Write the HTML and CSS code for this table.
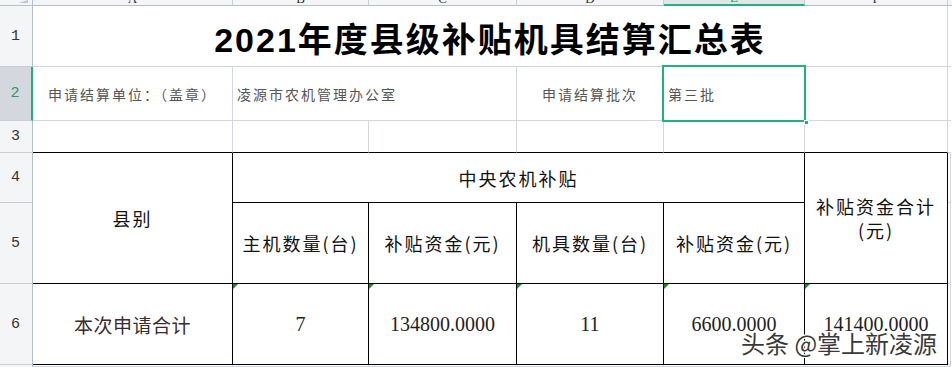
FILE: index.html
```html
<!DOCTYPE html>
<html lang="zh-CN">
<head>
<meta charset="utf-8">
<title>2021年度县级补贴机具结算汇总表</title>
<link rel="stylesheet" href="styles.css">
</head>
<body>
<div class="sheet">
  <div class="corner"><span class="corner-mark"></span></div>
  <div class="colhead"><span>A</span></div>
  <div class="colhead"><span>B</span></div>
  <div class="colhead"><span>C</span></div>
  <div class="colhead"><span>D</span></div>
  <div class="colhead colhead-sel"><span>E</span></div>
  <div class="colhead"><span>F</span></div>
  <div class="colhead colhead-g"></div>
  <div class="colhead colhead-end"></div>

  <div class="rowhead">1</div>
  <div class="cell title span6">2021年度县级补贴机具结算汇总表</div>
  <div class="cell gcol"></div>
  <div class="endcol"></div>

  <div class="rowhead rowhead-sel">2</div>
  <div class="cell info">申请结算单位：（盖章）</div>
  <div class="cell info left span2">凌源市农机管理办公室</div>
  <div class="cell info">申请结算批次</div>
  <div class="cell info left sel-cell">第三批<span class="sel-box"><span class="sel-handle"></span></span></div>
  <div class="cell"></div>
  <div class="cell gcol"></div>
  <div class="endcol"></div>

  <div class="rowhead">3</div>
  <div class="cell above"></div>
  <div class="cell above"></div>
  <div class="cell above"></div>
  <div class="cell above"></div>
  <div class="cell above"></div>
  <div class="cell above"></div>
  <div class="cell gcol"></div>
  <div class="endcol"></div>

  <div class="rowhead">4</div>
  <div class="cell tb th rspan2">县别</div>
  <div class="cell tb th span4">中央农机补贴</div>
  <div class="cell tb th rspan2">补贴资金合计<br>(元)</div>
  <div class="cell gcol gline"></div>
  <div class="endcol"></div>

  <div class="rowhead">5</div>
  <div class="cell tb th">主机数量(台)</div>
  <div class="cell tb th">补贴资金(元)</div>
  <div class="cell tb th">机具数量(台)</div>
  <div class="cell tb th">补贴资金(元)</div>
  <div class="cell gcol gline"></div>
  <div class="endcol"></div>

  <div class="rowhead">6</div>
  <div class="cell tb td tdname">本次申请合计</div>
  <div class="cell tb td flagged"><span class="flag"></span>7</div>
  <div class="cell tb td flagged"><span class="flag"></span>134800.0000</div>
  <div class="cell tb td flagged"><span class="flag"></span>11</div>
  <div class="cell tb td flagged"><span class="flag"></span>6600.0000</div>
  <div class="cell tb td flagged"><span class="flag"></span>141400.0000</div>
  <div class="cell gcol gline"></div>
  <div class="endcol"></div>

  <div class="rowhead rowhead-last"></div>
  <div class="cell"></div>
  <div class="cell"></div>
  <div class="cell"></div>
  <div class="cell"></div>
  <div class="cell"></div>
  <div class="cell"></div>
  <div class="cell gcol gline"></div>
  <div class="endcol"></div>
</div>
<div class="watermark">头条 @掌上新凌源</div>
</body>
</html>
```
FILE: styles.css
```css
* { box-sizing: border-box; }

body {
  margin: 0;
  width: 952px;
  height: 367px;
  overflow: hidden;
  position: relative;
  background: #ffffff;
  font-family: "Noto Sans CJK SC", sans-serif;
}

.sheet {
  display: grid;
  grid-template-columns: 33px 200px 136px 148px 147px 141px 143px 3px 1px;
  grid-template-rows: 6px 61px 54px 32px 50px 81px 81px 2px;
}

/* headers */
.corner {
  background: #f4f5f7;
  border-right: 1px solid #b6bdcd;
  border-bottom: 1px solid #b6bdcd;
  display: flex;
  justify-content: flex-end;
  align-items: flex-start;
  padding-right: 4px;
  overflow: hidden;
}
.corner-mark {
  width: 0;
  height: 0;
  border-left: 10px solid transparent;
  border-bottom: 3px solid #c4c7cd;
}

.colhead {
  background: #f4f5f7;
  border-right: 1px solid #c9cdd8;
  border-bottom: 1px solid #b6bdcd;
  overflow: hidden;
  display: flex;
  justify-content: center;
  align-items: flex-end;
  font-family: "Liberation Serif", serif;
  font-size: 13px;
  color: #333;
}
.colhead span {
  line-height: 13px;
  flex: none;
}
.colhead-sel {
  background: #e3e5e9;
  color: #21a366;
  border-bottom: 2px solid #1fb37a;
}
.colhead-g { border-right: none; }
.colhead-end { border-right: none; background: #f4f5f7; }

.rowhead {
  background: #f4f5f7;
  border-right: 1px solid #b4bccd;
  border-bottom: 1px solid #c8cdd9;
  display: flex;
  justify-content: center;
  align-items: center;
  font-family: "Liberation Mono", monospace;
  font-size: 15px;
  color: #333;
  padding-right: 1px;
}
.rowhead-sel {
  background: #d4d7dd;
  color: #1e9f6a;
  border-right: 2px solid #1fb37a;
}
.rowhead-last { border-bottom: none; }

/* cells */
.cell {
  border-right: 1px solid #d2d6e0;
  border-bottom: 1px solid #d2d6e0;
  display: flex;
  align-items: center;
  justify-content: center;
  padding: 0 4px;
  min-width: 0;
  white-space: nowrap;
}
.endcol { background: #ffffff; }
.gcol { border-right: none; padding: 0; }
.gcol.gline { border-right: 1px solid #d2d6e0; }

.span2 { grid-column: span 2; }
.span4 { grid-column: span 4; }
.span6 { grid-column: span 6; }
.rspan2 { grid-row: span 2; }
.left { justify-content: flex-start; }

.title {
  font-family: "Liberation Sans", "Noto Sans CJK SC", sans-serif;
  font-weight: bold;
  font-size: 34px;
  letter-spacing: 2px;
  color: #000;
  padding-top: 2px;
}

.info {
  font-size: 14px;
  letter-spacing: 2px;
  color: #555;
}

.sel-cell { position: relative; }
.sel-box {
  position: absolute;
  left: -2px;
  top: -2px;
  right: -2px;
  bottom: -2px;
  border: 2px solid #1fb37a;
}
.sel-handle {
  position: absolute;
  right: -5px;
  bottom: -5px;
  width: 5px;
  height: 5px;
  background: #1fb37a;
  border: 1px solid #ffffff;
}

.above { border-bottom-color: #000; }

.tb {
  border-right-color: #000;
  border-bottom-color: #000;
}

.th {
  font-size: 18px;
  letter-spacing: 2px;
  line-height: 24px;
  color: #111;
  text-align: center;
  white-space: normal;
}

.td {
  font-family: "Liberation Serif", "Noto Sans CJK SC", serif;
  font-size: 20px;
  color: #1e1e1e;
}
.tdname {
  font-family: "Noto Sans CJK SC", sans-serif;
  font-size: 19px;
  letter-spacing: 0.5px;
  color: #3a2c2e;
}

.flagged { position: relative; }
.flag {
  position: absolute;
  left: 0;
  top: 0;
  width: 0;
  height: 0;
  border-top: 5px solid #1a8a1a;
  border-right: 5px solid transparent;
}

.watermark {
  position: absolute;
  left: 741px;
  top: 331px;
  font-family: "Noto Sans CJK SC", sans-serif;
  font-size: 24px;
  line-height: 24px;
  color: #3a3a3a;
  white-space: nowrap;
  text-shadow: 1px 1px 0 #fff, -1px -1px 0 #fff, 1px -1px 0 #fff, -1px 1px 0 #fff, 0 0 2px #fff;
}
```
